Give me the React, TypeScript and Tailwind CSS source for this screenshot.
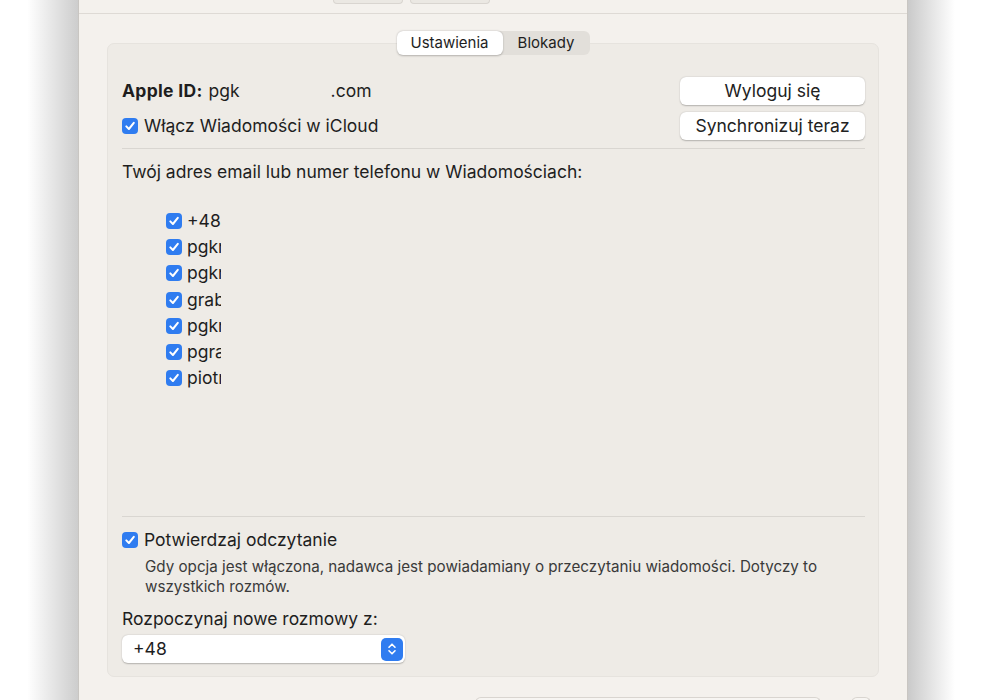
import React from "react";

const font = { fontFamily: "Inter, 'Noto Sans', sans-serif" };

function Check() {
  return (
    <svg width="16" height="16" viewBox="0 0 16 16" className="shrink-0">
      <rect x="0" y="0" width="16" height="16" rx="4" fill="#2f7cf0" />
      <path d="M4.3 8.4 L6.9 11 L11.8 4.9" fill="none" stroke="white" strokeWidth="2" strokeLinecap="round" strokeLinejoin="round" />
    </svg>
  );
}

const addresses = [
  "+48 601 234 567",
  "pgkrol@icloud.com",
  "pgkrol@me.com",
  "grabowski.p@gmail.com",
  "pgkrol@mac.com",
  "pgrabowski@o2.pl",
  "piotr.grabowski@wp.pl",
];

function Button({ children }: { children: React.ReactNode }) {
  return (
    <button className="h-[28px] w-[185px] rounded-[6px] bg-white text-[17.5px] text-[#222] shadow-[0_0.5px_1.5px_rgba(0,0,0,0.25)]">
      {children}
    </button>
  );
}

export default function App() {
  return (
    <div className="flex h-[700px] w-[986px] overflow-hidden bg-white text-[#1e1e1e]" style={font}>
      <div className="w-[78px] shrink-0 bg-linear-to-r from-white from-35% to-[#cdcdcd]" />

      <div className="flex w-[830px] shrink-0 flex-col border-x border-[#c9c6c2] bg-[#f4f1ed]">
        {/* toolbar remnant */}
        <div className="h-[14px] shrink-0 border-b border-[#dedad5]">
          <div className="flex gap-[7px] pl-[254px]">
            <div className="h-[4px] w-[70px] rounded-b-[5px] border-x border-b border-[#d9d5d0] bg-[#ebe8e3]" />
            <div className="h-[4px] w-[80px] rounded-b-[5px] border-x border-b border-[#d9d5d0] bg-[#ebe8e3]" />
          </div>
        </div>

        {/* tabs */}
        <div className="relative z-10 mt-[17px] flex shrink-0 justify-center">
          <div className="flex h-[24px] rounded-[6px] bg-[#e2dfda] text-[15px]">
            <div className="flex w-[106px] items-center justify-center rounded-[6px] bg-white shadow-[0_0.5px_2px_rgba(0,0,0,0.25)]">
              Ustawienia
            </div>
            <div className="flex w-[87px] items-center justify-center">Blokady</div>
          </div>
        </div>

        {/* panel */}
        <div className="mx-[28px] -mt-[12px] flex h-[634px] shrink-0 flex-col rounded-[7px] border border-[#e6e3de] bg-[#eeebe6] pl-[14px] pr-[13px] pt-[33px]">
          <div className="flex flex-col gap-[7px]">
            <div className="flex h-[28px] items-center justify-between">
              <div className="flex items-center text-[17.5px]">
                <span className="font-bold tracking-[0.3px]">Apple ID:</span>
                <span className="ml-[6px]">pgk</span>
                <span className="ml-[91px]">.com</span>
              </div>
              <Button>Wyloguj się</Button>
            </div>
            <div className="flex h-[28px] items-center justify-between">
              <div className="flex items-center gap-[6px] text-[17.5px]">
                <Check />
                <span>Włącz Wiadomości w iCloud</span>
              </div>
              <Button>Synchronizuj teraz</Button>
            </div>
          </div>

          <div className="mt-[8px] border-t border-[#d9d6d1]" />

          <div className="mt-[13px] h-[20px] text-[17.5px] leading-[20px]">
            Twój adres email lub numer telefonu w Wiadomościach:
          </div>

          <div className="ml-[44px] mt-[26px] flex flex-col">
            {addresses.map((a) => (
              <div key={a} className="flex h-[26.2px] items-center gap-[5px]">
                <Check />
                <div className="w-[34px] overflow-hidden whitespace-nowrap text-[17.5px]">{a}</div>
              </div>
            ))}
          </div>

          <div className="mt-auto border-t border-[#d9d6d1]" />

          <div className="mt-[13px] flex h-[20px] items-center gap-[6px] text-[17.5px]">
            <Check />
            <span>Potwierdzaj odczytanie</span>
          </div>
          <div className="ml-[23px] mt-[7px] text-[15.2px] leading-[20px] text-[#3a3a3a]">
            Gdy opcja jest włączona, nadawca jest powiadamiany o przeczytaniu wiadomości. Dotyczy to
            <br />
            wszystkich rozmów.
          </div>

          <div className="mt-[12px] h-[20px] text-[17.5px] leading-[20px]">Rozpoczynaj nowe rozmowy z:</div>

          <div className="mb-[13px] mt-[6px] flex h-[28px] w-[283px] items-center justify-between rounded-[6px] bg-white pl-[11px] pr-[2px] text-[17.5px] shadow-[0_0.5px_1.5px_rgba(0,0,0,0.25)]">
            <span>+48</span>
            <div className="flex h-[23px] w-[22px] items-center justify-center rounded-[5px] bg-[#2f7cf0]">
              <svg width="12" height="16" viewBox="0 0 12 16">
                <path d="M3 6.2 L6 3.2 L9 6.2 M3 9.8 L6 12.8 L9 9.8" fill="none" stroke="white" strokeWidth="1.6" strokeLinecap="round" strokeLinejoin="round" />
              </svg>
            </div>
          </div>
        </div>

        {/* bottom remnant */}
        <div className="mt-[20px] flex shrink-0 gap-[30px] pl-[396px]">
          <div className="h-[6px] w-[346px] rounded-t-[6px] border-x border-t border-[#d9d5d0] bg-[#f7f5f2]" />
          <div className="h-[6px] w-[20px] rounded-t-[6px] border-x border-t border-[#d9d5d0] bg-[#f7f5f2]" />
        </div>
      </div>

      <div className="w-[78px] shrink-0 bg-linear-to-l from-white from-40% to-[#cacaca]" />
    </div>
  );
}
